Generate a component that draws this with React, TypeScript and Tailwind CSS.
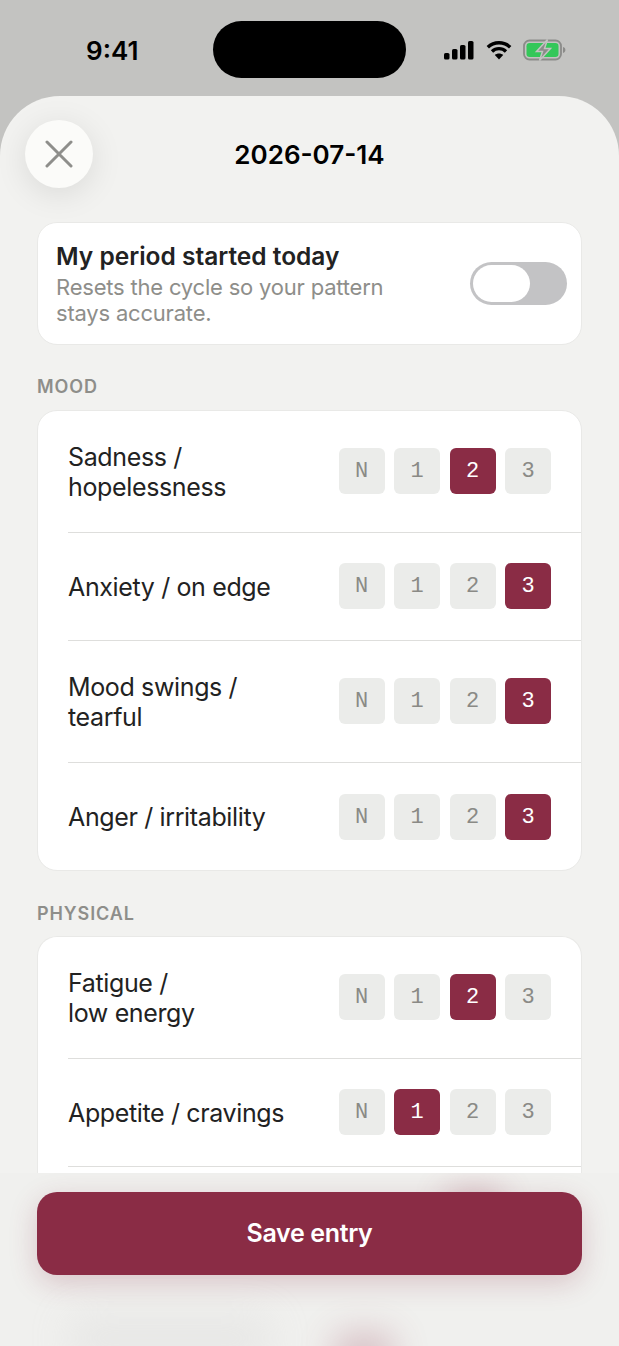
const FONT = "font-['Inter','Noto_Sans',sans-serif]";

type Row = { label: string[]; value: number };

const MOOD: Row[] = [
  { label: ["Sadness /", "hopelessness"], value: 2 },
  { label: ["Anxiety / on edge"], value: 3 },
  { label: ["Mood swings /", "tearful"], value: 3 },
  { label: ["Anger / irritability"], value: 3 },
];

const PHYSICAL: Row[] = [
  { label: ["Fatigue /", "low energy"], value: 2 },
  { label: ["Appetite / cravings"], value: 1 },
];

const LEVELS = ["N", "1", "2", "3"];

function StatusIcons() {
  return (
    <div className="flex items-center pl-[38px]">
      <svg width="30" height="20" viewBox="0 0 30 20" className="text-black" fill="currentColor">
        <rect x="0" y="13" width="5.5" height="6.5" rx="1.6" />
        <rect x="8" y="9" width="5.5" height="10.5" rx="1.6" />
        <rect x="16" y="5" width="5.5" height="14.5" rx="1.6" />
        <rect x="24" y="1" width="5.5" height="18.5" rx="1.6" />
      </svg>
      <svg width="26" height="20" viewBox="0 0 26 20" className="ml-[12px]" fill="none" stroke="#000" strokeWidth="3.4">
        <path d="M1.8 7.2C8 1.2 18 1.2 24.2 7.2" />
        <path d="M6 11.4c4-3.7 10-3.7 14 0" />
        <path d="M13 19.5l-4.2-4.4c2.4-2 6-2 8.4 0z" fill="#000" stroke="none" />
      </svg>
      <svg width="44" height="22" viewBox="0 0 44 22" className="ml-[11px]">
        <rect x="1" y="1.5" width="37" height="19" rx="5.5" fill="none" stroke="#8b8b89" strokeWidth="1.8" />
        <rect x="3.5" y="4" width="32" height="14" rx="3.2" fill="#34c759" />
        <path d="M40 8v6c1.6-.4 2.4-1.6 2.4-3s-.8-2.6-2.4-3z" fill="#8b8b89" />
        <path d="M24.5 0.5l-11 12h6l-3 9 11-12h-6z" fill="#8b8b89" stroke="#c3c3c1" strokeWidth="1.5" />
      </svg>
    </div>
  );
}

function Levels({ value }: { value: number }) {
  return (
    <div className="flex shrink-0 gap-[9.5px]">
      {LEVELS.map((level, i) => (
        <div
          key={level}
          className={`flex h-[46px] w-[46px] items-center justify-center rounded-[6px] pt-px font-['Liberation_Mono',monospace] text-[22px] ${
            i === value ? "bg-[#8a2c45] text-white" : "bg-[#ebecea] text-[#8a8a86]"
          }`}
        >
          {level}
        </div>
      ))}
    </div>
  );
}

function SymptomRow({ row, first, last }: { row: Row; first: boolean; last?: boolean }) {
  return (
    <div className="pl-[30px]">
      <div
        className={`flex items-center justify-between pb-[31px] pr-[30px] pt-[30px] ${
          first ? "" : "border-t border-[#dededc]"
        }`}
      >
        <div className="translate-y-px text-[25px] leading-[30px] tracking-[-0.36px] text-[#222222]">
          {row.label.map((line) => (
            <div key={line}>{line}</div>
          ))}
        </div>
        <div className={last ? "translate-y-px" : ""}>
          <Levels value={row.value} />
        </div>
      </div>
    </div>
  );
}

export default function App() {
  return (
    <div className={`${FONT} flex h-[1346px] w-[619px] flex-col overflow-hidden bg-[#c3c3c1]`}>
      <div className="grid h-[96px] shrink-0 grid-cols-[213px_193px_1fr] items-start pt-[21px]">
        <div className="flex h-[57px] items-center pl-[86px] pt-px text-[26px] font-semibold text-black">9:41</div>
        <div className="h-[57px] rounded-[29px] bg-black" />
        <div className="flex h-[57px] items-center">
          <StatusIcons />
        </div>
      </div>

      <div className="relative flex-1 overflow-hidden rounded-t-[60px] bg-[#f2f2f0]">
        <div className="grid grid-cols-[68px_1fr_68px] items-center px-[25px] pb-[34px] pt-[24px]">
          <div className="flex h-[68px] w-[68px] items-center justify-center rounded-full bg-[#fbfbf9] shadow-[0_6px_32px_rgba(0,0,0,0.1)]">
            <svg width="28" height="28" viewBox="0 0 28 28" fill="none" stroke="#8e8e8b" strokeWidth="3" strokeLinecap="round">
              <path d="M2 2l24 24M26 2L2 26" />
            </svg>
          </div>
          <div className="pt-[2px] text-center text-[26px] font-semibold leading-[34px] text-black">2026-07-14</div>
        </div>

        <div className="px-[37px]">
          <div className="flex h-[123px] items-center justify-between rounded-[20px] border border-[#e9e9e7] bg-white pl-[18px] pr-[14px]">
            <div className="w-[350px]">
              <div className="-mt-px text-[24.5px] font-semibold leading-[30px] text-[#222222]">My period started today</div>
              <div className="mt-[3px] text-[22px] leading-[26px] tracking-[-0.2px] text-[#8e8e8a]">
                Resets the cycle so your pattern stays accurate.
              </div>
            </div>
            <div className="h-[43px] w-[97px] rounded-full bg-[#c3c3c5] p-[3px]">
              <div className="h-[37px] w-[57px] rounded-full bg-white" />
            </div>
          </div>

          <div className="mb-[11px] mt-[30px] h-[24px] text-[18px] font-semibold leading-[24px] tracking-[0.9px] text-[#8e8e8a]">
            MOOD
          </div>
          <div className="rounded-[20px] border border-[#e9e9e7] bg-white">
            {MOOD.map((row, i) => (
              <SymptomRow key={row.label[0]} row={row} first={i === 0} last={i === MOOD.length - 1} />
            ))}
          </div>

          <div className="mb-[10px] mt-[31px] h-[24px] text-[18px] font-semibold leading-[24px] tracking-[0.9px] text-[#8e8e8a]">
            PHYSICAL
          </div>
          <div className="rounded-t-[20px] border border-b-0 border-[#e9e9e7] bg-white">
            {PHYSICAL.map((row, i) => (
              <SymptomRow key={row.label[0]} row={row} first={i === 0} />
            ))}
            <div className="ml-[30px] h-[60px] border-t border-[#dededc]" />
          </div>
        </div>

        {/* footer: soft smudges stand in for the rows blurred behind it */}
        <div className="absolute inset-x-0 bottom-0 h-[173px] overflow-hidden bg-[#f0f0ee] px-[37px] pt-[19px]">
          <div className="absolute left-[70px] top-[145px] h-[40px] w-[200px] bg-[#c8c8c8] opacity-25 blur-[20px]" />
          <div className="absolute left-[445px] top-[16px] h-[46px] w-[58px] bg-[#8a2c45] opacity-25 blur-[16px]" />
          <div className="absolute left-[335px] top-[160px] h-[46px] w-[58px] bg-[#8a2c45] opacity-25 blur-[18px]" />
          <div className="relative flex h-[83px] items-center justify-center rounded-[20px] bg-[#8a2c45] pt-px text-[25px] font-semibold tracking-[-0.35px] text-white shadow-[0_8px_28px_rgba(138,44,69,0.22)]">
            Save entry
          </div>
        </div>
      </div>
    </div>
  );
}
